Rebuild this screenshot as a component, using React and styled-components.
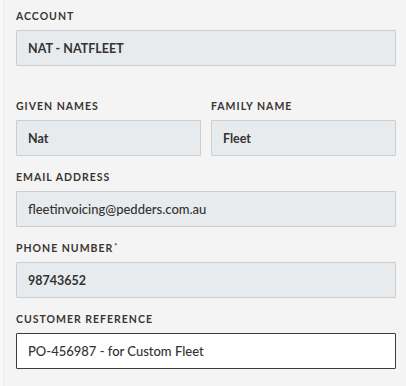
import React from 'react'
import styled, {createGlobalStyle} from 'styled-components'

const GlobalStyle = createGlobalStyle`
  html, body {
    margin: 0;
    padding: 0;
    background: #f4f4f4;
  }
  body {
    font-family: Lato, "Open Sans", Arial, sans-serif;
    color: #333;
  }
`

const Panel = styled.div`
  box-sizing: border-box;
  width: 406px;
  min-height: 386px;
  padding: 10px 10px 0 16px;
  box-shadow: inset 3px 0 0 #f8f8f8, inset 4px 0 0 #ebebeb;
`

const Field = styled.div`
  display: flex;
  flex-direction: column;
  margin-bottom: ${p => p.spacing || 15}px;
`

const Row = styled.div`
  display: grid;
  grid-template-columns: 1fr 1fr;
  column-gap: 10px;
`

const Label = styled.label`
  font-size: 10.5px;
  line-height: 13px;
  font-weight: 700;
  letter-spacing: 1px;
  text-transform: uppercase;
  color: #3a3533;
  margin-bottom: 7px;
  sup {
    font-size: 7px;
    vertical-align: top;
    line-height: 8px;
    margin-left: 1px;
  }
`

const Input = styled.input`
  box-sizing: border-box;
  width: 100%;
  height: 36px;
  padding: 0 11px;
  font-family: Lato, "Open Sans", Arial, sans-serif;
  font-size: ${p => (p.$light ? 13 : 12.5)}px;
  font-weight: ${p => (p.$light ? 500 : 700)};
  color: #333;
  border-radius: 1px;
  outline: none;
  background: ${p => (p.$active ? '#ffffff' : '#e8ebee')};
  border: 1px solid ${p => (p.$active ? '#3d3d3d' : '#cdcdcd')};
  caret-color: #333;
`

export default function App() {
  return (
    <Panel>
      <GlobalStyle />
      <Field spacing={34}>
        <Label>Account</Label>
        <Input readOnly value="NAT - NATFLEET" />
      </Field>
      <Row>
        <Field>
          <Label>Given Names</Label>
          <Input readOnly value="Nat" />
        </Field>
        <Field>
          <Label>Family Name</Label>
          <Input readOnly value="Fleet" />
        </Field>
      </Row>
      <Field>
        <Label>Email Address</Label>
        <Input readOnly $light value="fleetinvoicing@pedders.com.au" />
      </Field>
      <Field>
        <Label>Phone Number<sup>*</sup></Label>
        <Input readOnly value="98743652" />
      </Field>
      <Field>
        <Label>Customer Reference</Label>
        <Input $active $light autoFocus defaultValue="PO-456987 - for Custom Fleet" />
      </Field>
    </Panel>
  )
}
